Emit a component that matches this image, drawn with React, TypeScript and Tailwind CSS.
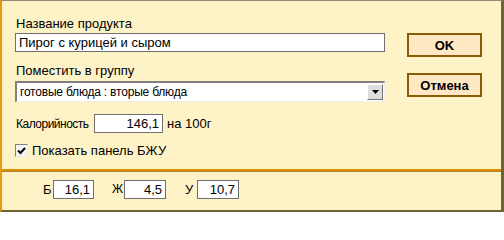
import React from 'react';

/**
 * Product editor dialog (Windows-classic style, cream theme)
 */

const font = "font-['Liberation_Sans',Arial,sans-serif]";

const Field: React.FC<{ value: string; className?: string }> = ({ value, className }) => (
  <div
    className={`flex items-center justify-end bg-white border border-[#6f6f6f] pr-[3px] text-[13px] text-black ${className ?? ''}`}
  >
    {value}
  </div>
);

const DialogButton: React.FC<{ label: string }> = ({ label }) => (
  <button
    type="button"
    className="w-[75px] h-[24px] bg-[#ffe9c4] border-2 border-[#8a5c08] text-[13px] font-bold text-black leading-none"
  >
    {label}
  </button>
);

export default function App() {
  return (
    <div
      className={`w-[504px] h-[212px] flex flex-col bg-[#fef2c7] border-t border-t-[#8e8a7c] border-l-2 border-l-[#e39c12] border-r-[3px] border-r-[#6d6438] border-b-2 border-b-[#6d6438] ${font} text-black`}
    >
      {/* Main section */}
      <div className="flex h-[168px] pl-[13px]">
        <div className="w-[370px] flex flex-col pt-[15px]">
          <div className="h-[15px] pl-[1px] text-[13px] leading-[15px]">Название продукта</div>
          <div className="h-[19px] mt-[2px] bg-white border border-[#6f6f6f] px-[3px] text-[13px] leading-[17px]">
            Пирог с курицей и сыром
          </div>

          <div className="h-[15px] mt-[11px] pl-[1px] text-[13px] leading-[15px]">Поместить в группу</div>
          <div className="h-[21px] mt-[3px] flex items-stretch bg-white border-t-2 border-l-2 border-t-[#808080] border-l-[#808080] border-b border-r border-b-[#eeeeee] border-r-[#eeeeee]">
            <div className="flex-1 px-[3px] text-[12px] tracking-[-0.2px] leading-[18px]">готовые блюда : вторые блюда</div>
            <div className="w-[16px] my-[1px] mr-[1px] bg-[#dedede] border border-t-white border-l-white border-r-[#707070] border-b-[#707070] flex items-center justify-center">
              <svg width="7" height="4" viewBox="0 0 7 4" aria-hidden="true">
                <path d="M0 0h7L3.5 4z" fill="#000" />
              </svg>
            </div>
          </div>

          <div className="flex items-center mt-[12px] h-[19px]">
            <span className="w-[79px] pl-[1px] text-[12px] tracking-[-0.5px] whitespace-nowrap">Калорийность</span>
            <Field value="146,1" className="w-[69px] h-[19px]" />
            <span className="ml-[4px] text-[13px]">на 100г</span>
          </div>

          <div className="flex items-center mt-[11px] h-[13px]">
            <span className="w-[13px] h-[13px] bg-[#f4f4f4] border border-t-[#808080] border-l-[#808080] border-r-[#e8e8e8] border-b-[#e8e8e8] flex items-center justify-center">
              <svg width="9" height="8" viewBox="0 0 9 8" aria-hidden="true">
                <path d="M1 3.5 L3.5 6 L8 1" stroke="#000" strokeWidth="2" fill="none" />
              </svg>
            </span>
            <span className="ml-[4px] text-[13px]">Показать панель БЖУ</span>
          </div>
        </div>

        <div className="flex flex-col ml-[22px] pt-[32px] gap-[16px]">
          <DialogButton label="OK" />
          <DialogButton label="Отмена" />
        </div>
      </div>

      {/* Separator */}
      <div className="h-[2px] bg-[#d98e00]" />
      <div className="h-[1px] bg-[#b08030]" />

      {/* Nutrition panel */}
      <div className="flex-1 flex items-start pt-[8px] pl-[41px] text-[13px]">
        <span className="w-[10px] leading-[19px]">Б</span>
        <Field value="16,1" className="w-[41px] h-[19px]" />
        <span className="ml-[18px] w-[12px] text-[12px] leading-[19px]">Ж</span>
        <Field value="4,5" className="w-[42px] h-[19px]" />
        <span className="ml-[19px] w-[12px] leading-[19px]">У</span>
        <Field value="10,7" className="w-[42px] h-[19px]" />
      </div>
    </div>
  );
}
